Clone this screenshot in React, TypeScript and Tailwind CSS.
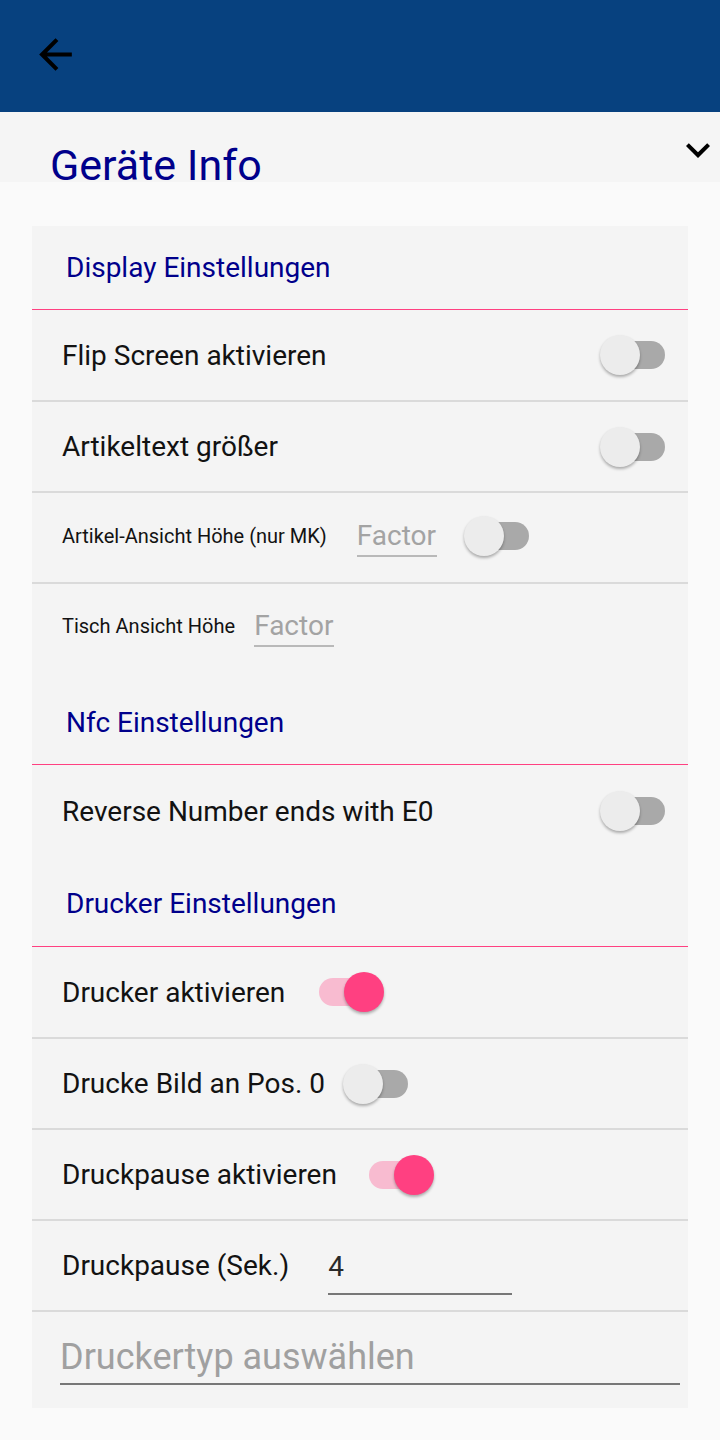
import React from 'react';

function Toggle({ on = false }: { on?: boolean }) {
    return (
        <div className="relative h-[40px] w-[79px] shrink-0">
            <div
                className={`absolute left-[14px] top-[6px] h-[28px] w-[51px] rounded-full ${on ? 'bg-[#f8bbd0]' : 'bg-[#a9a9a9]'}`}
            />
            <div
                className={`absolute top-0 h-[40px] w-[40px] rounded-full shadow-[0_2px_3px_rgba(0,0,0,0.3)] ${on ? 'left-[39px] bg-[#ff4081]' : 'left-0 bg-[#ececec]'}`}
            />
        </div>
    );
}

function SectionHeader({ title, className = '' }: { title: string; className?: string }) {
    return (
        <>
            <div className={`flex items-center pl-[34px] text-[28px] leading-[33px] text-[#00008b] ${className}`}>
                {title}
            </div>
            <div className="h-px bg-[#ff4081]" />
        </>
    );
}

function Divider() {
    return <div className="h-[2px] bg-[#dadada]" />;
}

function Row({ children, className = 'h-[89px]' }: { children: React.ReactNode; className?: string }) {
    return <div className={`flex items-center pl-[30px] pr-[9px] ${className}`}>{children}</div>;
}

function Label({ children, small = false }: { children: React.ReactNode; small?: boolean }) {
    return (
        <span className={`${small ? 'text-[20px] leading-[24px]' : 'text-[28px] leading-[33px]'} whitespace-nowrap text-[#121212]`}>
            {children}
        </span>
    );
}

function FactorInput({ className = '' }: { className?: string }) {
    return (
        <div className={`mt-[4px] flex w-[80px] flex-col ${className}`}>
            <span className="text-[28px] leading-[33px] text-[#a3a3a3]">Factor</span>
            <div className="mt-[3px] h-[2px] bg-[#b9b9b9]" />
        </div>
    );
}

export default function App() {
    return (
        <div className="min-h-[1440px] w-[720px] bg-[#fafafa] font-['Roboto',_'Liberation_Sans',_sans-serif]">
            {/* app bar */}
            <div className="relative h-[112px] bg-[#07417f]">
                <svg className="absolute left-[31px] top-[30px]" width="49" height="49" viewBox="0 0 24 24" aria-hidden="true">
                    <path d="M20 11H7.83l5.59-5.59L12 4l-8 8 8 8 1.41-1.41L7.83 13H20v-2z" fill="#000" />
                </svg>
            </div>

            {/* title bar */}
            <div className="relative h-[70px] bg-[#f5f5f5]">
                <div className="pl-[50px] pt-[36px] text-[43px] leading-[34px] text-[#00008b]">Geräte Info</div>
                <svg className="absolute left-[674px] top-[14px]" width="48" height="48" viewBox="0 0 24 24" aria-hidden="true">
                    <path d="M16.59 8.59L12 13.17 7.41 8.59 6 10l6 6 6-6z" fill="#000" />
                </svg>
            </div>

            <div className="px-[32px] pt-[44px]">
                <div className="bg-[#f4f4f4]">
                    <SectionHeader title="Display Einstellungen" className="h-[83px]" />

                    <Row className="h-[90px]">
                        <Label>Flip Screen aktivieren</Label>
                        <div className="flex-1" />
                        <Toggle />
                    </Row>
                    <Divider />

                    <Row>
                        <Label>Artikeltext größer</Label>
                        <div className="flex-1" />
                        <Toggle />
                    </Row>
                    <Divider />

                    <Row className="h-[89px] pb-[4px]">
                        <Label small>Artikel-Ansicht Höhe (nur MK)</Label>
                        <FactorInput className="ml-[30px]" />
                        <div className="ml-[27px]">
                            <Toggle />
                        </div>
                    </Row>
                    <Divider />

                    <Row className="h-[84px]">
                        <Label small>Tisch Ansicht Höhe</Label>
                        <FactorInput className="ml-[19px]" />
                    </Row>

                    <SectionHeader title="Nfc Einstellungen" className="h-[96px] pt-[12px]" />

                    <Row className="h-[92px]">
                        <Label>Reverse Number ends with E0</Label>
                        <div className="flex-1" />
                        <Toggle />
                    </Row>

                    <SectionHeader title="Drucker Einstellungen" className="h-[89px] pt-[4px]" />

                    <Row className="h-[90px]">
                        <Label>Drucker aktivieren</Label>
                        <div className="ml-[20px]">
                            <Toggle on />
                        </div>
                    </Row>
                    <Divider />

                    <Row>
                        <Label>Drucke Bild an Pos. 0</Label>
                        <div className="ml-[18px]">
                            <Toggle />
                        </div>
                    </Row>
                    <Divider />

                    <Row>
                        <Label>Druckpause aktivieren</Label>
                        <div className="ml-[18px]">
                            <Toggle on />
                        </div>
                    </Row>
                    <Divider />

                    <Row>
                        <Label>Druckpause (Sek.)</Label>
                        <div className="ml-[39px] mt-[14px] flex w-[184px] flex-col">
                            <span className="text-[28px] leading-[33px] text-[#2a2a2a]">4</span>
                            <div className="mt-[10px] h-[2px] bg-[#777777]" />
                        </div>
                    </Row>
                    <Divider />

                    <div className="h-[96px] pl-[28px] pr-[8px] pt-[24px]">
                        <div className="text-[36px] leading-[42px] text-[#a0a0a0]">Druckertyp auswählen</div>
                        <div className="mt-[5px] h-[2px] bg-[#777777]" />
                    </div>
                </div>
            </div>
        </div>
    );
}
